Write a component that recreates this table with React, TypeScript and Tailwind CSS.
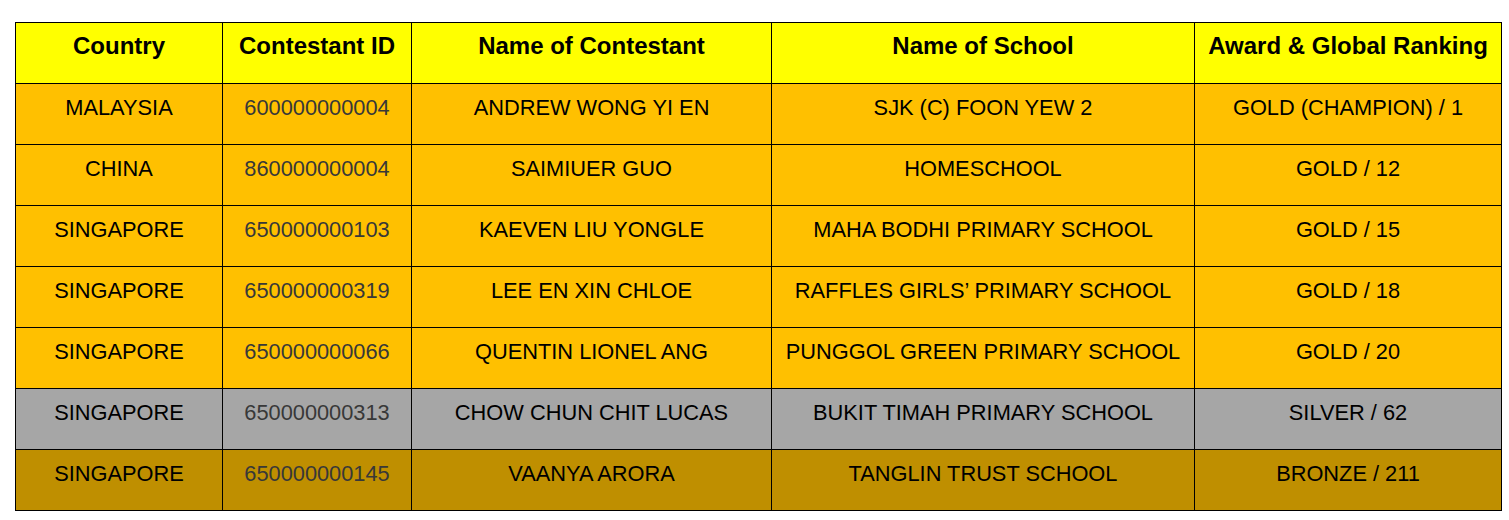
const rows = [
  { country: 'MALAYSIA', id: '600000000004', name: 'ANDREW WONG YI EN', school: 'SJK (C) FOON YEW 2', award: 'GOLD (CHAMPION) / 1', tier: 'gold' },
  { country: 'CHINA', id: '860000000004', name: 'SAIMIUER GUO', school: 'HOMESCHOOL', award: 'GOLD / 12', tier: 'gold' },
  { country: 'SINGAPORE', id: '650000000103', name: 'KAEVEN LIU YONGLE', school: 'MAHA BODHI PRIMARY SCHOOL', award: 'GOLD / 15', tier: 'gold' },
  { country: 'SINGAPORE', id: '650000000319', name: 'LEE EN XIN CHLOE', school: 'RAFFLES GIRLS’ PRIMARY SCHOOL', award: 'GOLD / 18', tier: 'gold' },
  { country: 'SINGAPORE', id: '650000000066', name: 'QUENTIN LIONEL ANG', school: 'PUNGGOL GREEN PRIMARY SCHOOL', award: 'GOLD / 20', tier: 'gold' },
  { country: 'SINGAPORE', id: '650000000313', name: 'CHOW CHUN CHIT LUCAS', school: 'BUKIT TIMAH PRIMARY SCHOOL', award: 'SILVER / 62', tier: 'silver' },
  { country: 'SINGAPORE', id: '650000000145', name: 'VAANYA ARORA', school: 'TANGLIN TRUST SCHOOL', award: 'BRONZE / 211', tier: 'bronze' },
];

const tierBg: Record<string, string> = {
  gold: 'bg-[#ffc000]',
  silver: 'bg-[#a6a6a6]',
  bronze: 'bg-[#bf8f00]',
};

const headers = ['Country', 'Contestant ID', 'Name of Contestant', 'Name of School', 'Award & Global Ranking'];

export default function App() {
  return (
    <div className="min-h-[520px] w-[1509px] bg-white pt-[22px] pl-[15px] font-['Liberation_Sans',Arial,sans-serif]">
      <table className="w-[1486px] table-fixed border-collapse text-black">
        <colgroup>
          <col className="w-[207px]" />
          <col className="w-[189px]" />
          <col className="w-[360px]" />
          <col className="w-[423px]" />
          <col className="w-[307px]" />
        </colgroup>
        <thead>
          <tr className="h-[61px] bg-[#ffff00]">
            {headers.map((h) => (
              <th key={h} className="border border-black px-1 pt-[9px] align-top text-[24px] leading-[27px] font-bold whitespace-nowrap">
                {h}
              </th>
            ))}
          </tr>
        </thead>
        <tbody>
          {rows.map((r) => (
            <tr key={r.id} className={`h-[61px] ${tierBg[r.tier]}`}>
              <td className="border border-black px-1 pt-[11px] text-center align-top text-[21.8px] leading-[25px] whitespace-nowrap">{r.country}</td>
              <td className="border border-black px-1 pt-[11px] text-center align-top text-[21.8px] leading-[25px] whitespace-nowrap text-[#383838]">{r.id}</td>
              <td className="border border-black px-1 pt-[11px] text-center align-top text-[21.8px] leading-[25px] whitespace-nowrap">{r.name}</td>
              <td className="border border-black px-1 pt-[11px] text-center align-top text-[21.8px] leading-[25px] whitespace-nowrap">{r.school}</td>
              <td className="border border-black px-1 pt-[11px] text-center align-top text-[21.8px] leading-[25px] whitespace-nowrap">{r.award}</td>
            </tr>
          ))}
        </tbody>
      </table>
    </div>
  );
}
